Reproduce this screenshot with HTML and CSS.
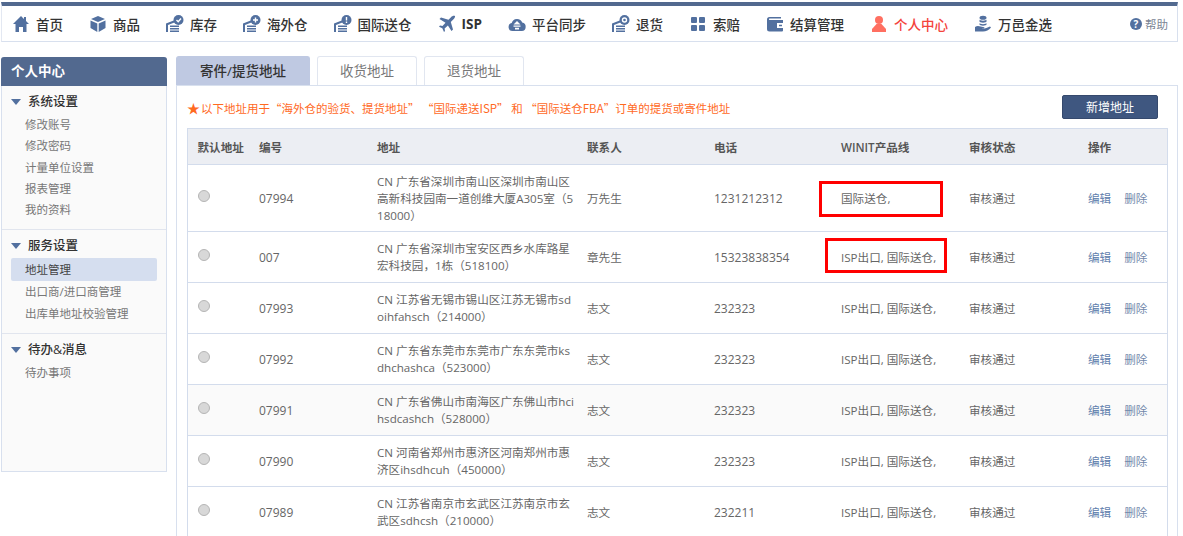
FILE: index.html
```html
<!DOCTYPE html>
<html lang="zh-CN">
<head>
    <meta charset="UTF-8">
    <title>个人中心 - 地址管理</title>
    <link rel="stylesheet" href="styles.css">
</head>
<body>
    <svg class="defs">
        <symbol id="i-form" viewBox="0 0 18 18">
            <path d="M0 17V8.500l9-3.500v2.300L2 10v7z"/><path d="M4 10.500h9v1.500H4zM4 13h9v1.500H4zM4 15.500h9V17H4z"/>
            <circle cx="12.500" cy="5" r="5"/>
        </symbol>
    </svg>
    <nav class="topnav">
        <a class="nav-item"><svg class="nav-icon" viewBox="0 0 18 18"><path d="M9 1 1 9h2.500v8H7v-5h4v5h3.500V9H17l-3-3V2h-2v2z"/></svg>首页</a>
        <a class="nav-item"><svg class="nav-icon" viewBox="0 0 18 18"><path d="M9 1 2 4l7 3 7-3zM1.500 5.500V13l6.800 4V8.500zM16.500 5.500 9.700 8.500V17l6.800-4z"/></svg>商品</a>
        <a class="nav-item"><svg class="nav-icon" viewBox="0 0 18 18"><use href="#i-form"/><path class="mark" d="M10.500 5l1.700 1.700 2.800-3.200"/></svg>库存</a>
        <a class="nav-item"><svg class="nav-icon" viewBox="0 0 18 18"><use href="#i-form"/><path class="mark" d="M10 5h5M12.500 2.500v5"/></svg>海外仓</a>
        <a class="nav-item"><svg class="nav-icon" viewBox="0 0 18 18"><use href="#i-form"/><path class="mark" d="M12.500 2v3.500M12.500 6.500v1.500"/></svg>国际送仓</a>
        <a class="nav-item is-latin"><svg class="nav-icon" viewBox="0 0 18 18"><path d="M17 1c-1.500-.6-3 .2-4 1.200L10.500 4.700 3 2.500 1.500 4l6 3.700-3 3.300-2.500-.4L1 11.700l3.300 1.500L6 17l1-1-.4-2.600 3.300-3L13.500 16l1.500-1.500-2.200-7.500 2.700-2.700c1-1 1.900-2.400 1.500-3.300z"/></svg>ISP</a>
        <a class="nav-item"><svg class="nav-icon" viewBox="0 0 18 18"><path fill-rule="evenodd" d="M4.500 16a4 4 0 0 1-.8-7.900A5.500 5.500 0 0 1 14.200 7.500 4.300 4.300 0 0 1 13.800 16zM9 6 5.500 9.500h7zM5.500 10.500v1.300h7v-1.300zM7 12.800v1.700h4v-1.700z"/></svg>平台同步</a>
        <a class="nav-item"><svg class="nav-icon" viewBox="0 0 18 18"><use href="#i-form"/><circle class="mark" cx="12.500" cy="5" r="2"/></svg>退货</a>
        <a class="nav-item"><svg class="nav-icon" viewBox="0 0 18 18"><rect x="2" y="2" width="6" height="6" rx="1"/><rect x="10" y="2" width="6" height="6" rx="1"/><rect x="2" y="10" width="6" height="6" rx="1"/><rect x="10" y="10" width="6" height="6" rx="1"/></svg>索赔</a>
        <a class="nav-item"><svg class="nav-icon" viewBox="0 0 18 18"><path fill-rule="evenodd" d="M3.500 2H15v1.500H3.500a.8.800 0 0 0 0 1.500H17v10.500a1 1 0 0 1-1 1H3.500A2.500 2.500 0 0 1 1 14V4.500A2.500 2.500 0 0 1 3.500 2zM11 8v5h6V8zM13 9.800h3v1.400h-3z"/></svg>结算管理</a>
        <a class="nav-item is-active"><svg class="nav-icon" viewBox="0 0 18 18"><circle cx="9" cy="5" r="4"/><path d="M6.500 9h5L16 14v3H2v-3z"/></svg>个人中心</a>
        <a class="nav-item"><svg class="nav-icon" viewBox="0 0 18 18"><ellipse cx="9" cy="2.800" rx="3.500" ry="2"/><path d="M5.500 4.500c0 1.500 7 1.500 7 0v2c0 1.500-7 1.500-7 0zM5.500 8c0 1.500 7 1.500 7 0v1.500c0 1.500-7 1.500-7 0z"/><path d="M1 12c3-2 6 0 8 0s2 1.500 0 1.500h-2c3 .6 6-.5 9-2l1 1c-2 2.500-5 4-8 4H1z"/></svg>万邑金选</a>
        <a class="nav-help"><span class="help-icon">?</span>帮助</a>
    </nav>

    <div class="page">
        <aside class="sidebar">
            <h2 class="side-title">个人中心</h2>
            <section class="side-group">
                <h3 class="side-head">系统设置</h3>
                <a class="side-link">修改账号</a>
                <a class="side-link">修改密码</a>
                <a class="side-link">计量单位设置</a>
                <a class="side-link">报表管理</a>
                <a class="side-link">我的资料</a>
            </section>
            <section class="side-group">
                <h3 class="side-head">服务设置</h3>
                <a class="side-link is-current">地址管理</a>
                <a class="side-link">出口商/进口商管理</a>
                <a class="side-link">出库单地址校验管理</a>
            </section>
            <section class="side-group">
                <h3 class="side-head">待办&amp;消息</h3>
                <a class="side-link">待办事项</a>
            </section>
        </aside>

        <main class="content">
            <div class="tabs">
                <a class="tab is-active">寄件/提货地址</a>
                <a class="tab">收货地址</a>
                <a class="tab">退货地址</a>
            </div>
            <div class="panel">
                <div class="notice-row">
                    <p class="notice"><span class="star">★</span>以下地址用于“海外仓的验货、提货地址” “国际递送ISP” 和 “国际送仓FBA”订单的提货或寄件地址</p>
                    <button class="btn-add">新增地址</button>
                </div>
                <table class="addr-table">
                    <colgroup>
                        <col class="c1"><col class="c2"><col class="c3"><col class="c4"><col class="c5"><col class="c6"><col class="c7"><col class="c8">
                    </colgroup>
                    <thead>
                        <tr><th>默认地址</th><th>编号</th><th>地址</th><th>联系人</th><th>电话</th><th>WINIT产品线</th><th>审核状态</th><th>操作</th></tr>
                    </thead>
                    <tbody>
                        <tr class="row-tall">
                            <td><span class="radio"></span></td><td class="num">07994</td>
                            <td class="addr">CN 广东省深圳市南山区深圳市南山区高新科技园南一道创维大厦A305室（518000）</td>
                            <td>万先生</td><td class="num">1231212312</td>
                            <td class="mark-cell"><span class="red-box box-a"></span>国际送仓,</td>
                            <td>审核通过</td><td class="ops"><a>编辑</a><a>删除</a></td>
                        </tr>
                        <tr>
                            <td><span class="radio"></span></td><td class="num">007</td>
                            <td class="addr">CN 广东省深圳市宝安区西乡水库路星宏科技园，1栋（518100）</td>
                            <td>章先生</td><td class="num">15323838354</td>
                            <td class="mark-cell"><span class="red-box box-b"></span>ISP出口, 国际送仓,</td>
                            <td>审核通过</td><td class="ops"><a>编辑</a><a>删除</a></td>
                        </tr>
                        <tr>
                            <td><span class="radio"></span></td><td class="num">07993</td>
                            <td class="addr">CN 江苏省无锡市锡山区江苏无锡市sdoihfahsch（214000）</td>
                            <td>志文</td><td class="num">232323</td><td>ISP出口, 国际送仓,</td>
                            <td>审核通过</td><td class="ops"><a>编辑</a><a>删除</a></td>
                        </tr>
                        <tr>
                            <td><span class="radio"></span></td><td class="num">07992</td>
                            <td class="addr">CN 广东省东莞市东莞市广东东莞市ksdhchashca（523000）</td>
                            <td>志文</td><td class="num">232323</td><td>ISP出口, 国际送仓,</td>
                            <td>审核通过</td><td class="ops"><a>编辑</a><a>删除</a></td>
                        </tr>
                        <tr class="row-hover">
                            <td><span class="radio"></span></td><td class="num">07991</td>
                            <td class="addr">CN 广东省佛山市南海区广东佛山市hcihsdcashch（528000）</td>
                            <td>志文</td><td class="num">232323</td><td>ISP出口, 国际送仓,</td>
                            <td>审核通过</td><td class="ops"><a>编辑</a><a>删除</a></td>
                        </tr>
                        <tr>
                            <td><span class="radio"></span></td><td class="num">07990</td>
                            <td class="addr">CN 河南省郑州市惠济区河南郑州市惠济区ihsdhcuh（450000）</td>
                            <td>志文</td><td class="num">232323</td><td>ISP出口, 国际送仓,</td>
                            <td>审核通过</td><td class="ops"><a>编辑</a><a>删除</a></td>
                        </tr>
                        <tr>
                            <td><span class="radio"></span></td><td class="num">07989</td>
                            <td class="addr">CN 江苏省南京市玄武区江苏南京市玄武区sdhcsh（210000）</td>
                            <td>志文</td><td class="num">232211</td><td>ISP出口, 国际送仓,</td>
                            <td>审核通过</td><td class="ops"><a>编辑</a><a>删除</a></td>
                        </tr>
                    </tbody>
                </table>
            </div>
        </main>
    </div>
</body>
</html>
```

FILE: styles.css
```css
html, body {
    margin: 0;
    height: 536px;
    overflow: hidden;
    background: #fff;
}

body {
    padding: 2px 5px 0 1px;
    box-sizing: border-box;
    font-family: "Open Sans", "Noto Sans CJK SC", sans-serif;
    font-size: 12px;
    color: #666;
}

.defs {
    display: none;
}

.topnav {
    display: flex;
    align-items: center;
    height: 35px;
    padding-left: 10px;
    border-top: 4px solid #52698f;
    border-bottom: 1px solid #d8e0ee;
    border-left: 1px solid #e3e8f2;
    border-right: 1px solid #d8e0ee;
    gap: 26px;
}

.nav-item {
    display: flex;
    align-items: center;
    gap: 6px;
    font-size: 13.500px;
    font-weight: 500;
    color: #333;
}

.nav-item.is-latin {
    font-weight: 700;
}

.nav-icon {
    width: 18px;
    height: 18px;
    fill: #52709f;
    flex: none;
}

.nav-icon .mark {
    fill: none;
    stroke: #fff;
    stroke-width: 1.400;
}

.nav-item.is-active {
    color: #f4433c;
}

.is-active .nav-icon {
    fill: #ff6f61;
}

.nav-help {
    display: flex;
    align-items: center;
    gap: 3px;
    margin-left: auto;
    margin-right: 9px;
    font-size: 11.500px;
    color: #7b8494;
}

.help-icon {
    width: 12px;
    height: 12px;
    border-radius: 50%;
    background: #52709f;
    color: #fff;
    font-size: 10px;
    font-weight: 700;
    line-height: 12px;
    text-align: center;
}

.page {
    display: flex;
    align-items: flex-start;
    gap: 9px;
    margin-top: 14px;
}

.sidebar {
    width: 164px;
    height: 414px;
    flex: none;
    margin-top: 1px;
    background: #fafafa;
    border: 1px solid #d8e0ee;
    border-top: 0;
    border-radius: 3px 3px 0 0;
}

.side-title {
    margin: 0 -1px;
    height: 29px;
    line-height: 29px;
    padding-left: 10px;
    background: #52698f;
    color: #fff;
    font-size: 13.500px;
    font-weight: 700;
    border-radius: 3px 3px 0 0;
}

.side-group {
    padding: 6px 9px 9px 9px;
    border-bottom: 1px solid #e1e5ee;
}

.side-group:last-child {
    border-bottom: 0;
}

.side-head {
    position: relative;
    margin: 0 0 2px;
    height: 20px;
    line-height: 20px;
    padding-left: 17px;
    font-size: 12.500px;
    font-weight: 500;
    color: #333;
}

.side-head::before {
    content: "";
    position: absolute;
    left: 0;
    top: 7px;
    border-left: 5px solid transparent;
    border-right: 5px solid transparent;
    border-top: 6px solid #52709f;
}

.side-link {
    display: block;
    height: 21.300px;
    line-height: 21px;
    padding-left: 14px;
    color: #777;
    font-size: 11.500px;
}

.side-link.is-current {
    height: 23px;
    line-height: 23px;
    background: #d5deef;
    border-radius: 2px;
    color: #444;
}

.content {
    flex: 1;
    min-width: 0;
}

.tabs {
    display: flex;
    gap: 7px;
    height: 29px;
}

.tab {
    width: 100px;
    box-sizing: border-box;
    text-align: center;
    line-height: 28px;
    font-size: 13.500px;
    color: #777;
    background: #fff;
    border: 1px solid #e1e6f0;
    border-bottom: 0;
    border-radius: 3px 3px 0 0;
}

.tab.is-active {
    width: 134px;
    background: #bfc9e2;
    border-color: #bfc9e2;
    color: #333;
    font-weight: 500;
}

.panel {
    padding: 0 10px;
    border: 1px solid #d8e0ee;
    border-bottom: 0;
    height: 500px;
}

.notice-row {
    display: flex;
    align-items: center;
    justify-content: space-between;
    height: 42px;
    padding: 0 9px 0 0;
}

.notice {
    margin: 0;
    font-family: "Noto Sans CJK SC", sans-serif;
    color: #ff6a1f;
    font-size: 11.500px;
}

.star {
    font-size: 13px;
    margin-right: 1px;
}

.btn-add {
    width: 96px;
    height: 24px;
    padding: 0;
    background: #3f5780;
    border: 1px solid #35496d;
    border-radius: 2px;
    color: #fff;
    font-family: inherit;
    font-size: 12px;
}

.addr-table {
    width: 980px;
    table-layout: fixed;
    border-collapse: collapse;
    border: 1px solid #d3dcec;
    font-size: 11.600px;
}

.c1 { width: 62px; }
.c2 { width: 118px; }
.c3 { width: 210px; }
.c4 { width: 127px; }
.c5 { width: 127px; }
.c6 { width: 128px; }
.c7 { width: 119px; }
.c8 { width: 89px; }

.addr-table th {
    height: 35px;
    padding: 0 0 0 9.500px;
    background: #eceef3;
    border-bottom: 1px solid #d3dcec;
    text-align: left;
    font-weight: 600;
    color: #555;
    white-space: nowrap;
}

.addr-table td {
    height: 50px;
    padding: 0 10.500px 0 9.500px;
    border-bottom: 1px solid #d3dcec;
    line-height: 17px;
    word-break: break-all;
}

.addr-table td.num {
    font-size: 12px;
}

.addr-table td.addr {
    padding-right: 1px;
}

.row-tall td {
    height: 66px;
}

.row-hover td {
    background: #fafafa;
}

.radio {
    display: block;
    width: 10px;
    height: 10px;
    margin-top: -4px;
    border: 1px solid #b5b5b5;
    border-radius: 50%;
    background: #d8d8d8;
}

.ops a {
    margin-right: 13px;
    color: #5f80ad;
}

.ops a + a {
    color: #7288ab;
    margin-right: 0;
}

.mark-cell {
    position: relative;
    white-space: nowrap;
}

.red-box {
    position: absolute;
    border: 3px solid #f00;
    box-sizing: border-box;
}

.box-a {
    left: -13px;
    top: 16px;
    width: 124px;
    height: 36px;
}

.box-b {
    left: -7px;
    top: 6px;
    width: 122px;
    height: 35px;
}
```
